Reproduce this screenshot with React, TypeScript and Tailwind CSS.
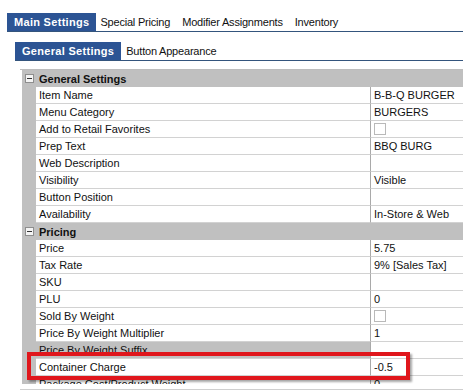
import React from "react";

type Row = {
    label: string;
    value?: string;
    check?: boolean;
    selected?: boolean;
};

type Section = {
    title: string;
    rows: Row[];
};

const SECTIONS: Section[] = [
    {
        title: "General Settings",
        rows: [
            { label: "Item Name", value: "B-B-Q BURGER" },
            { label: "Menu Category", value: "BURGERS" },
            { label: "Add to Retail Favorites", check: true },
            { label: "Prep Text", value: "BBQ BURG" },
            { label: "Web Description" },
            { label: "Visibility", value: "Visible" },
            { label: "Button Position" },
            { label: "Availability", value: "In-Store & Web" },
        ],
    },
    {
        title: "Pricing",
        rows: [
            { label: "Price", value: "5.75" },
            { label: "Tax Rate", value: "9% [Sales Tax]" },
            { label: "SKU" },
            { label: "PLU", value: "0" },
            { label: "Sold By Weight", check: true },
            { label: "Price By Weight Multiplier", value: "1" },
            { label: "Price By Weight Suffix", selected: true },
            { label: "Container Charge", value: "-0.5" },
            { label: "Package Cost/Product Weight", value: "0" },
        ],
    },
];

const STYLES = {
    TAB_ON: "h-[18px] px-[7px] flex items-center bg-[#2c5494] text-white font-bold tracking-[0.3px]",
    TAB_OFF: "h-[18px] px-[6px] flex items-center text-[#111] tracking-[-0.2px]",
    HEADER: "flex h-[17px] bg-[#c0c0c0]",
    ROW: "flex h-[17px]",
    GUTTER: "w-[14px] shrink-0 bg-[#c0c0c0]",
    LABEL: "w-[334px] shrink-0 pl-[3px] flex items-center border-b border-[#d2d2d2]",
    VALUE: "flex-1 pl-[3px] flex items-center border-b border-l border-[#d2d2d2] border-l-[#a9a9a9] bg-white",
};

const MinusBox = () => (
    <div className="w-[14px] shrink-0 flex items-center justify-center">
        <div className="w-[9px] h-[9px] border border-[#8e8e8e] bg-[#f4f4f4] flex items-center justify-center">
            <div className="w-[5px] h-px bg-[#333]" />
        </div>
    </div>
);

const CheckBox = () => <div className="w-[12px] h-[12px] border border-[#b9b9b9] bg-white" />;

export default function App() {
    return (
        <div
            className="relative w-[463px] h-[392px] overflow-hidden bg-white text-[11px] leading-[14px] text-[#111]"
            style={{ fontFamily: '"Liberation Sans", Arial, sans-serif' }}
        >
            <div className="pt-[13px] pl-[7px]">
                <div className="flex items-end border-b border-[#34557d]">
                    <div className={STYLES.TAB_ON}>Main Settings</div>
                    <div className={`${STYLES.TAB_OFF} ml-[-2px]`}>Special Pricing</div>
                    <div className={STYLES.TAB_OFF}>Modifier Assignments</div>
                    <div className={STYLES.TAB_OFF}>Inventory</div>
                </div>
            </div>

            <div className="pt-[10px] pl-[15px]">
                <div className="flex items-end border-b border-[#34557d]">
                    <div className={STYLES.TAB_ON}>General Settings</div>
                    <div className={`${STYLES.TAB_OFF} ml-[-1px]`}>Button Appearance</div>
                </div>
            </div>

            <div className="mt-[8px] ml-[20px] border-t border-[#bdbdbd]">
                <div className="ml-[2px] h-[314px] overflow-hidden">
                    {SECTIONS.map((section) => (
                        <div key={section.title}>
                            <div className={STYLES.HEADER}>
                                <MinusBox />
                                <div className="pl-[3px] flex items-center font-bold">{section.title}</div>
                            </div>
                            {section.rows.map((row) => (
                                <div key={row.label} className={STYLES.ROW}>
                                    <div className={STYLES.GUTTER} />
                                    <div className={`${STYLES.LABEL} ${row.selected ? "bg-[#c0c0c0]" : "bg-white"}`}>
                                        {row.label}
                                    </div>
                                    <div className={STYLES.VALUE}>
                                        {row.check ? <CheckBox /> : row.value}
                                    </div>
                                </div>
                            ))}
                        </div>
                    ))}
                </div>
                <div className="mt-[5px] border-t border-[#cfcfcf] h-[10px]" />
            </div>

            {/* highlight annotation */}
            <div className="absolute left-[27px] top-[352px] w-[383px] h-[28px] border-[4px] border-[#e0161c] shadow-[2px_2px_2px_rgba(0,0,0,0.35)]" />
        </div>
    );
}
